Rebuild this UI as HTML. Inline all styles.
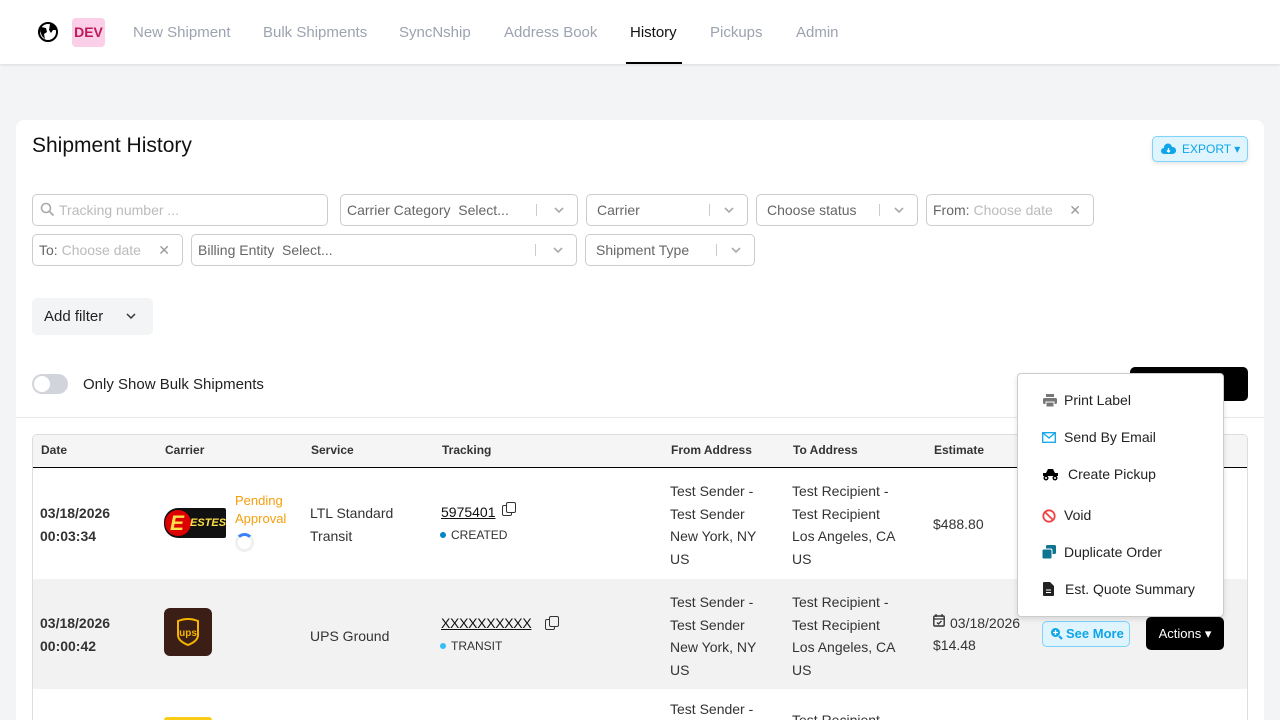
<!DOCTYPE html>
<html><head><meta charset="utf-8"><style>
*{box-sizing:border-box;margin:0;padding:0}
html,body{width:1280px;height:720px;overflow:hidden}
body{background:#f3f4f6;font-family:"Liberation Sans",sans-serif;color:#333;position:relative}
.abs{position:absolute}
.hdr{position:absolute;left:0;top:0;width:1280px;height:64px;background:#fff;box-shadow:0 1px 3px rgba(0,0,0,.1)}
.nav{position:absolute;top:24px;font-size:15px;color:#9ca3af}
.card{position:absolute;left:16px;top:120px;width:1248px;height:600px;background:#fff;border-radius:8px 8px 0 0}
.inp{position:absolute;height:32px;border:1px solid #ccc;border-radius:5px;font-size:14px;color:#666;line-height:30px;padding-left:10px;background:#fff}
.chev{position:absolute;right:12px;top:10px;width:12px;height:10px}
.x{position:absolute;right:12px;top:0;color:#999;font-size:14px}
.sep{position:absolute;top:9px;width:1px;height:12px;background:#ccc}
.ph{color:#bbb}
.th{position:absolute;top:443px;font-size:12px;font-weight:bold;color:#333}
.td{position:absolute;font-size:14px;color:#333;line-height:22.5px}
.menu div{position:absolute;left:46px;font-size:14px;color:#222}
</style></head><body>
<svg width="0" height="0" style="position:absolute"><defs><symbol id="cv" viewBox="0 0 12 10"><path d="M2 3l4 4 4-4" fill="none" stroke="#aaa" stroke-width="1.6"/></symbol></defs></svg>
<div class="hdr">
 <svg class="abs" style="left:36px;top:21px" width="24" height="22" viewBox="0 0 24 22"><circle cx="12" cy="11" r="9" fill="#fff" stroke="#000" stroke-width="2"/><path d="M5 6l5 1 1 4-3 2 1 5-3-3-2-5zM14 3l5 2 1 4-3 0-2 3-2-3z" fill="#000"/></svg>
 <div class="abs" style="left:72px;top:18px;width:33px;height:29px;background:#fbcfe8;border-radius:4px;color:#be185d;font-weight:bold;font-size:14px;text-align:center;line-height:29px">DEV</div>
 <div class="nav" style="left:133px">New Shipment</div>
 <div class="nav" style="left:263px">Bulk Shipments</div>
 <div class="nav" style="left:399px">SyncNship</div>
 <div class="nav" style="left:504px">Address Book</div>
 <div class="nav" style="left:630px;color:#111">History</div>
 <div class="abs" style="left:626px;top:62px;width:56px;height:2px;background:#000"></div>
 <div class="nav" style="left:710px">Pickups</div>
 <div class="nav" style="left:796px">Admin</div>
</div>
<div class="card"></div>
<div class="abs" style="left:32px;top:134px;font-size:21px;color:#111">Shipment History</div>
<div class="abs" style="left:1152px;top:136px;width:96px;height:26px;background:#e0f4fd;border:1px solid #7dd3fc;border-radius:5px;box-shadow:0 2px 4px rgba(0,0,0,.1);color:#0ea5e9;font-size:12px;line-height:24px;padding-left:29px">EXPORT ▾</div>
<svg class="abs" style="left:1161px;top:143px" width="15" height="12" viewBox="0 0 15 12"><path d="M3 11a3 3 0 0 1 0-6 4 4 0 0 1 8-1 3.5 3.5 0 0 1 1 7z" fill="#0ea5e9"/><path d="M7.5 5v4M6 7.5l1.5 1.5 1.5-1.5" stroke="#fff" stroke-width="1.3" fill="none"/></svg>

<div class="inp" style="left:32px;top:194px;width:296px;padding-left:26px"><span class="ph">Tracking number ...</span></div>
<svg class="abs" style="left:40px;top:202px" width="15" height="15"><circle cx="6" cy="6" r="4.5" stroke="#aaa" stroke-width="1.6" fill="none"/><path d="M9.5 9.5l4 4" stroke="#aaa" stroke-width="1.8"/></svg>
<div class="inp" style="left:340px;top:194px;width:238px;padding-left:6px">Carrier Category &nbsp;Select...<span class="sep" style="right:40px"></span><svg class="chev"><use href="#cv"/></svg></div>
<div class="inp" style="left:586px;top:194px;width:162px">Carrier<span class="sep" style="right:37px"></span><svg class="chev"><use href="#cv"/></svg></div>
<div class="inp" style="left:756px;top:194px;width:162px">Choose status<span class="sep" style="right:37px"></span><svg class="chev"><use href="#cv"/></svg></div>
<div class="inp" style="left:926px;top:194px;width:168px;padding-left:6px">From: <span class="ph">Choose date</span><span class="x">✕</span></div>
<div class="inp" style="left:32px;top:234px;width:151px;padding-left:6px">To: <span class="ph">Choose date</span><span class="x">✕</span></div>
<div class="inp" style="left:191px;top:234px;width:386px;padding-left:6px">Billing Entity &nbsp;Select...<span class="sep" style="right:40px"></span><svg class="chev"><use href="#cv"/></svg></div>
<div class="inp" style="left:585px;top:234px;width:170px">Shipment Type<span class="sep" style="right:37px"></span><svg class="chev"><use href="#cv"/></svg></div>

<div class="abs" style="left:32px;top:298px;width:121px;height:37px;background:#f3f4f6;border-radius:5px;font-size:15px;line-height:37px;padding-left:12px;color:#222">Add filter</div>
<svg class="abs" style="left:124px;top:311px" width="14" height="10" viewBox="0 0 12 10"><path d="M2 3l4 4 4-4" fill="none" stroke="#333" stroke-width="1.5"/></svg>

<div class="abs" style="left:32px;top:374px;width:36px;height:20px;background:#d1d5db;border-radius:10px"><div class="abs" style="left:2px;top:2px;width:16px;height:16px;border-radius:50%;background:#fff"></div></div>
<div class="abs" style="left:83px;top:376px;font-size:15px;color:#222">Only Show Bulk Shipments</div>
<div class="abs" style="left:1130px;top:367px;width:118px;height:34px;background:#000;border-radius:5px"></div>
<div class="abs" style="left:16px;top:417px;width:1248px;height:1px;background:#e5e7eb"></div>

<div class="abs" style="left:32px;top:434px;width:1216px;height:286px;border:1px solid #ddd;border-bottom:none;border-radius:5px 5px 0 0;overflow:hidden">
 <div class="abs" style="left:0;top:0;width:1216px;height:33px;background:#f5f5f5;border-bottom:1px solid #000"></div>
 <div class="abs" style="left:0;top:144px;width:1216px;height:110px;background:#f2f2f2"></div>
</div>
<div class="th" style="left:41px">Date</div><div class="th" style="left:165px">Carrier</div><div class="th" style="left:311px">Service</div><div class="th" style="left:442px">Tracking</div><div class="th" style="left:671px">From Address</div><div class="th" style="left:793px">To Address</div><div class="th" style="left:934px">Estimate</div>

<div class="td" style="left:40px;top:502px;font-weight:bold">03/18/2026<br>00:03:34</div>
<div class="abs" style="left:164px;top:508px;width:62px;height:30px;background:#111;border-radius:14px 2px 2px 14px"><div class="abs" style="left:1px;top:2px;width:26px;height:26px;border-radius:50%;background:#d00"></div><div class="abs" style="left:6px;top:4px;font:italic bold 21px 'Liberation Sans';color:#fde047">E</div><div class="abs" style="left:26px;top:9px;font:italic bold 11px 'Liberation Sans';color:#fde047">ESTES</div></div>
<div class="abs" style="left:235px;top:492px;font-size:13px;color:#f59e0b;line-height:18px">Pending<br>Approval</div>
<div class="abs" style="left:235px;top:533px;width:19px;height:19px;border-radius:50%;border:3px solid #f0f0f0;border-top-color:#3b82f6"></div>
<div class="td" style="left:310px;top:502px">LTL Standard<br>Transit</div>
<div class="td" style="left:441px;top:501px;text-decoration:underline;color:#111">5975401</div>
<div class="abs" style="left:502px;top:505px;width:10px;height:11px;border:1.5px solid #333;border-radius:2px"></div><div class="abs" style="left:506px;top:502px;width:10px;height:11px;border:1.5px solid #333;border-radius:2px;background:#fff"></div>
<div class="abs" style="left:440px;top:532px;width:6px;height:6px;border-radius:50%;background:#0284c7"></div>
<div class="abs" style="left:451px;top:528px;font-size:12px;color:#333">CREATED</div>
<div class="td" style="left:670px;top:480px">Test Sender -<br>Test Sender<br>New York, NY<br>US</div>
<div class="td" style="left:792px;top:480px">Test Recipient -<br>Test Recipient<br>Los Angeles, CA<br>US</div>
<div class="td" style="left:933px;top:513px">$488.80</div>
<div class="abs" style="left:1190px;top:510px;width:34px;height:27px;background:#000;border-radius:5px"></div>

<div class="td" style="left:40px;top:612px;font-weight:bold">03/18/2026<br>00:00:42</div>
<div class="abs" style="left:164px;top:608px;width:48px;height:48px;background:#3b1f16;border-radius:6px"><svg class="abs" style="left:12px;top:10px" width="24" height="28" viewBox="0 0 24 28"><path d="M2 3q10-4 20 0v14q0 6-10 10Q2 23 2 17z" fill="none" stroke="#f5b400" stroke-width="2"/><text x="12" y="18" font-size="10" font-weight="bold" fill="#f5b400" text-anchor="middle" font-family="Liberation Sans">ups</text></svg></div>
<div class="td" style="left:310px;top:625px">UPS Ground</div>
<div class="td" style="left:441px;top:612px;text-decoration:underline;color:#111;letter-spacing:-.3px">XXXXXXXXXX</div>
<div class="abs" style="left:545px;top:619px;width:10px;height:11px;border:1.5px solid #333;border-radius:2px"></div><div class="abs" style="left:549px;top:616px;width:10px;height:11px;border:1.5px solid #333;border-radius:2px;background:#f2f2f2"></div>
<div class="abs" style="left:440px;top:643px;width:6px;height:6px;border-radius:50%;background:#38bdf8"></div>
<div class="abs" style="left:451px;top:639px;font-size:12px;color:#333">TRANSIT</div>
<div class="td" style="left:670px;top:591px">Test Sender -<br>Test Sender<br>New York, NY<br>US</div>
<div class="td" style="left:792px;top:591px">Test Recipient -<br>Test Recipient<br>Los Angeles, CA<br>US</div>
<svg class="abs" style="left:933px;top:614px" width="12" height="13"><rect x=".8" y="2" width="10.4" height="10" rx="1" fill="none" stroke="#333" stroke-width="1.4"/><path d="M3 0v3M9 0v3M1 5h10M4 8.5l1.5 1.5 3-3" stroke="#333" stroke-width="1.3" fill="none"/></svg>
<div class="td" style="left:950px;top:612px">03/18/2026</div>
<div class="td" style="left:933px;top:634px">$14.48</div>
<div class="abs" style="left:1042px;top:621px;width:88px;height:26px;background:#e0f4fd;border:1px solid #7dd3fc;border-radius:5px;color:#0ea5e9;font-size:13px;font-weight:bold;line-height:24px;padding-left:23px">See More</div>
<svg class="abs" style="left:1050px;top:627px" width="13" height="13"><circle cx="5.5" cy="5.5" r="4.5" fill="#0ea5e9"/><path d="M9 9l3 3" stroke="#0ea5e9" stroke-width="2.2"/><path d="M5.5 3v5M3 5.5h5" stroke="#fff" stroke-width="1.3"/></svg>
<div class="abs" style="left:1146px;top:617px;width:78px;height:33px;background:#000;border-radius:5px;color:#fff;font-size:13px;line-height:33px;text-align:center">Actions ▾</div>

<div class="abs" style="left:670px;top:701px;font-size:14px;color:#333;height:19px;overflow:hidden">Test Sender -</div>
<div class="abs" style="left:792px;top:712px;font-size:14px;color:#333;height:8px;overflow:hidden">Test Recipient -</div>
<div class="abs" style="left:164px;top:717px;width:48px;height:3px;background:#facc15;border-radius:6px 6px 0 0"></div>

<div class="abs menu" style="left:1017px;top:373px;width:207px;height:244px;background:#fff;border:1px solid #ccc;border-radius:4px;box-shadow:0 2px 6px rgba(0,0,0,.12)">
 <svg class="abs" style="left:25px;top:20px" width="14" height="13"><rect x="3" y="0" width="8" height="3" fill="#777"/><rect x="0" y="4" width="14" height="6" rx="1.5" fill="#777"/><rect x="3" y="8" width="8" height="5" fill="#777" stroke="#fff" stroke-width="1"/></svg>
 <div style="top:18px">Print Label</div>
 <svg class="abs" style="left:24px;top:58px" width="14" height="11"><rect x=".7" y=".7" width="12.6" height="9.6" fill="none" stroke="#0ea5e9" stroke-width="1.3"/><path d="M1 1l6 5 6-5" fill="none" stroke="#0ea5e9" stroke-width="1.3"/></svg>
 <div style="top:55px">Send By Email</div>
 <svg class="abs" style="left:24px;top:94px" width="17" height="13"><path d="M1 8V5h3l2-4h5l2 4h3v3z" fill="#000"/><circle cx="4" cy="10" r="2.5" fill="#000"/><circle cx="13" cy="10" r="2.5" fill="#000"/><circle cx="4" cy="10" r="1" fill="#fff"/><circle cx="13" cy="10" r="1" fill="#fff"/></svg>
 <div style="top:92px;left:50px">Create Pickup</div>
 <svg class="abs" style="left:24px;top:135px" width="14" height="14"><circle cx="7" cy="7" r="5.7" fill="none" stroke="#ef4444" stroke-width="1.8"/><path d="M3 3l8 8" stroke="#ef4444" stroke-width="1.8"/></svg>
 <div style="top:133px">Void</div>
 <svg class="abs" style="left:24px;top:171px" width="14" height="14"><rect x="4" y="0" width="10" height="9" rx="1.5" fill="#0e7490"/><rect x="0" y="4" width="10" height="10" rx="1.5" fill="#0e7490" stroke="#fff" stroke-width="1"/></svg>
 <div style="top:170px">Duplicate Order</div>
 <svg class="abs" style="left:25px;top:208px" width="11" height="14"><path d="M0 1q0-1 1-1h6l4 4v9q0 1-1 1H1q-1 0-1-1z" fill="#222"/><path d="M3 8h5M3 10.5h5" stroke="#fff" stroke-width="1"/></svg>
 <div style="top:207px;left:47px">Est. Quote Summary</div>
</div>
</body></html>
